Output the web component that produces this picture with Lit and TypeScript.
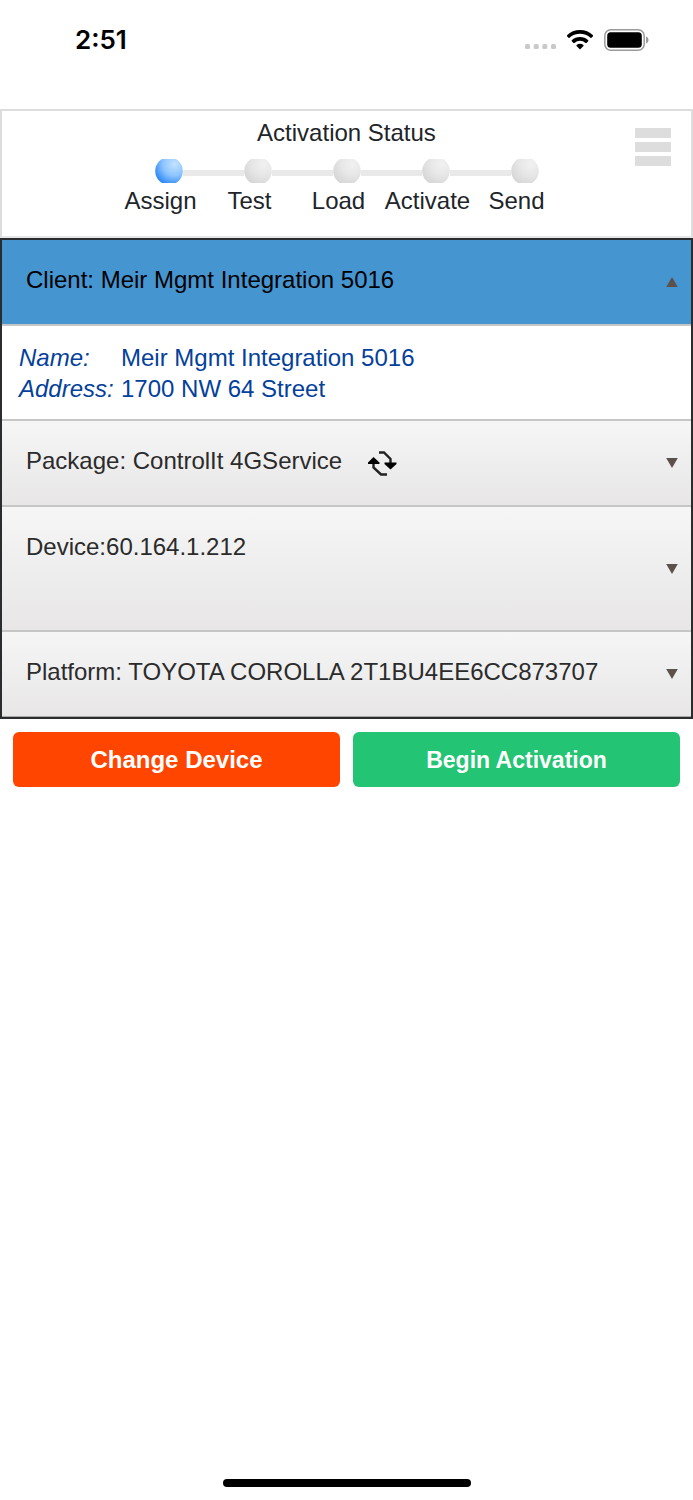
import { LitElement, html, css, nothing } from "lit";
import { customElement, property, state } from "lit/decorators.js";
import { classMap } from "lit/directives/class-map.js";

@customElement("status-bar")
class StatusBar extends LitElement {
  static styles = css`
    :host {
      display: flex;
      align-items: flex-start;
      justify-content: space-between;
      box-sizing: border-box;
      height: 109px;
      padding: 24px 44px 0 75px;
    }
    .time {
      font: 600 26px/32px Inter, sans-serif;
      color: #000;
    }
    .icons {
      display: flex;
      align-items: center;
      gap: 11px;
      height: 32px;
    }
    .signal {
      align-self: flex-end;
      margin-bottom: 7px;
    }
    svg {
      display: block;
    }
  `;

  render() {
    return html`
      <span class="time">2:51</span>
      <div class="icons">
        <svg class="signal" width="31" height="5" viewBox="0 0 31 5" fill="#c9c9c9" aria-hidden="true">
          <rect width="5" height="5" rx="1.5" />
          <rect x="8.7" width="5" height="5" rx="1.5" />
          <rect x="17.3" width="5" height="5" rx="1.5" />
          <rect x="26" width="5" height="5" rx="1.5" />
        </svg>
        <svg width="26" height="20" viewBox="0 0 26 20" aria-hidden="true">
          <path
            d="M13 0C8 0 3.4 1.9 0 5.2q-.4.5 0 1l1.5 1.6q.5.4 1 0C5.3 5.200 9 3.800 13 3.800s7.700 1.400 10.500 4q.5.4 1 0L26 6.200q.4-.5 0-1C22.600 1.900 18 0 13 0Z"
          />
          <path
            d="M13 7c-3.100 0-6 1.200-8.200 3.200q-.5.5 0 1l1.700 1.700q.5.4 1 0a8.200 8.200 0 0 1 11 0q.5.4 1 0l1.700-1.700q.5-.5 0-1C19 8.200 16.100 7 13 7Z"
          />
          <path d="M13 13.800c-1.300 0-2.500.4-3.400 1.200q-.5.5 0 1l2.900 3q.5.5 1 0l2.900-3q.5-.5 0-1c-.9-.8-2.100-1.200-3.400-1.200Z" />
        </svg>
        <svg width="45" height="22" viewBox="0 0 45 22" aria-hidden="true">
          <rect x=".8" y=".8" width="39.4" height="20.4" rx="6" fill="none" stroke="#9a9a9a" stroke-width="1.5" />
          <rect x="3.2" y="3.2" width="34.6" height="15.6" rx="3.5" />
          <path d="M42 7.500c1.600.6 2.500 1.900 2.500 3.500s-.9 2.900-2.500 3.500Z" fill="#9a9a9a" />
        </svg>
      </div>
    `;
  }
}

@customElement("step-dot")
class StepDot extends LitElement {
  @property({ type: Boolean }) active = false;

  static styles = css`
    :host {
      display: block;
    }
    svg {
      display: block;
    }
  `;

  render() {
    const [light, mid, dark] = this.active
      ? ["#c4e2ff", "#8cc4ff", "#1f7ff5"]
      : ["#f1f1f1", "#e6e6e6", "#d4d4d4"];
    return html`
      <svg width="28" height="24" viewBox="0 0 28 24" aria-hidden="true">
        <defs>
          <radialGradient id="ball" cx=".7" cy=".25" r=".85">
            <stop offset="0" stop-color=${light} />
            <stop offset=".5" stop-color=${mid} />
            <stop offset="1" stop-color=${dark} />
          </radialGradient>
        </defs>
        <circle cx="14" cy="12" r="13.8" fill="url(#ball)" />
      </svg>
    `;
  }
}

@customElement("activation-progress")
class ActivationProgress extends LitElement {
  @property({ type: Number }) current = 0;

  private steps = ["Assign", "Test", "Load", "Activate", "Send"];

  static styles = css`
    :host {
      display: block;
      box-sizing: border-box;
      min-height: 129px;
      padding: 7px 20px 0;
      border: 2px solid #ddd;
      border-bottom-color: #e6e6e6;
      color: #212529;
    }
    .bar {
      display: grid;
      grid-template-columns: 1fr auto 1fr;
      align-items: start;
    }
    .center {
      grid-column: 2;
    }
    h1 {
      margin: 0;
      font: inherit;
      line-height: 30px;
      text-align: center;
    }
    ol {
      display: grid;
      grid-template-columns: repeat(5, 89px);
      margin: 11px 0 0;
      padding: 0;
      list-style: none;
    }
    .step {
      display: flex;
      flex-direction: column;
      align-items: center;
    }
    .track {
      display: flex;
      align-items: center;
      align-self: stretch;
    }
    .line {
      flex: 1;
      height: 6px;
      margin-top: 4px;
      background: #e9e9e9;
    }
    .line.none {
      background: none;
    }
    .label {
      margin: 3px 16px 0 0;
      line-height: 30px;
      white-space: nowrap;
    }
    .menu {
      grid-column: 3;
      justify-self: end;
      display: grid;
      gap: 4px;
      width: 36px;
      margin-top: 10px;
      padding: 0;
      border: 0;
      background: none;
      cursor: pointer;
    }
    .stripe {
      height: 10px;
      background: #ddd;
    }
  `;

  render() {
    const last = this.steps.length - 1;
    return html`
      <div class="bar">
        <div class="center">
          <h1>Activation Status</h1>
          <ol>
            ${this.steps.map(
              (name, i) => html`
                <li class="step" aria-current=${i === this.current ? "step" : nothing}>
                  <div class="track">
                    <span class=${classMap({ line: true, none: i === 0 })}></span>
                    <step-dot ?active=${i === this.current}></step-dot>
                    <span class=${classMap({ line: true, none: i === last })}></span>
                  </div>
                  <span class="label">${name}</span>
                </li>
              `
            )}
          </ol>
        </div>
        <button class="menu" type="button" aria-label="Menu">
          <span class="stripe"></span>
          <span class="stripe"></span>
          <span class="stripe"></span>
        </button>
      </div>
    `;
  }
}

interface Section {
  id: string;
  title: string;
  tall?: boolean;
  refresh?: boolean;
  details?: [string, string][];
}

const SECTIONS: Section[] = [
  {
    id: "client",
    title: "Client: Meir Mgmt Integration 5016",
    details: [
      ["Name:", "Meir Mgmt Integration 5016"],
      ["Address:", "1700 NW 64 Street"],
    ],
  },
  { id: "package", title: "Package: ControlIt 4GService", refresh: true },
  { id: "device", title: "Device:60.164.1.212", tall: true },
  { id: "platform", title: "Platform: TOYOTA COROLLA 2T1BU4EE6CC873707" },
];

@customElement("section-list")
class SectionList extends LitElement {
  @state() private open = "client";

  static styles = css`
    :host {
      display: block;
      border: 2px solid #2b2c2e;
    }
    .row {
      display: flex;
      align-items: center;
      box-sizing: border-box;
      min-height: 86px;
      padding: 0 11px 0 24px;
      border-bottom: 2px solid #c6c6c6;
      background: linear-gradient(#f6f6f6, #e8e6e7);
      color: #2b2b2b;
    }
    .row.tall {
      min-height: 125px;
    }
    .row.open {
      background: #4595d1;
      color: #000;
    }
    .row.last {
      min-height: 85px;
      border-bottom: 1px solid #a8a8a8;
    }
    button {
      padding: 0;
      border: 0;
      background: none;
      color: inherit;
      font: inherit;
      cursor: pointer;
    }
    h2 {
      align-self: flex-start;
      margin: 25px 0 0;
      font: inherit;
      line-height: 30px;
    }
    .title {
      display: block;
      line-height: 30px;
      text-align: left;
    }
    .refresh {
      margin-left: 26px;
    }
    .arrow {
      margin-left: auto;
      padding: 2px;
    }
    .arrow.open svg {
      transform: rotate(180deg);
    }
    .details {
      display: grid;
      grid-template-columns: 102px 1fr;
      margin: 0;
      padding: 16px 17px 15px;
      border-bottom: 2px solid #c6c6c6;
      background: #fff;
      color: #04419b;
      line-height: 31px;
    }
    dt {
      font-style: italic;
    }
    dd {
      margin: 0;
    }
    svg {
      display: block;
    }
  `;

  private toggle(id: string) {
    this.open = this.open === id ? "" : id;
  }

  private refreshIcon() {
    return html`
      <svg width="29" height="26" viewBox="0 0 29 26" aria-hidden="true">
        <path d="M11 2.500H16L22.500 9V14" fill="none" stroke="#222" stroke-width="2.4" />
        <path d="M16.500 12.500H28.500V14L22.500 19.500L16.500 14Z" fill="#000" />
        <path d="M19 24.500H13L5.500 17.500V12" fill="none" stroke="#222" stroke-width="2.4" />
        <path d="M0 14V12.500L5.500 7L11.500 12.500V14Z" fill="#000" />
      </svg>
    `;
  }

  render() {
    return SECTIONS.map((s, i) => {
      const open = s.id === this.open;
      const label = s.title.split(":")[0];
      return html`
        <div class=${classMap({ row: true, open, tall: !!s.tall, last: i === SECTIONS.length - 1 })}>
          <h2>
            <button class="title" type="button" aria-expanded=${open} @click=${() => this.toggle(s.id)}>
              ${s.title}
            </button>
          </h2>
          ${s.refresh
            ? html`<button class="refresh" type="button" aria-label="Refresh package">${this.refreshIcon()}</button>`
            : nothing}
          <button
            class=${classMap({ arrow: true, open })}
            type="button"
            aria-label=${`Toggle ${label}`}
            @click=${() => this.toggle(s.id)}
          >
            <svg width="12" height="10" viewBox="0 0 12 10" aria-hidden="true">
              <path d="M.2 0H11.800L6 10Z" fill="#5c504c" />
            </svg>
          </button>
        </div>
        ${open && s.details
          ? html`<dl class="details">
              ${s.details.map(([k, v]) => html`<dt>${k}</dt><dd>${v}</dd>`)}
            </dl>`
          : nothing}
      `;
    });
  }
}

@customElement("app-root")
class AppRoot extends LitElement {
  static styles = css`
    :host {
      display: flex;
      flex-direction: column;
      box-sizing: border-box;
      min-height: 100vh;
      background: #fff;
      font: 24px/30px "Liberation Sans", Arial, sans-serif;
    }
    .actions {
      display: grid;
      grid-template-columns: 1fr 1fr;
      gap: 13px;
      padding: 13px;
    }
    .action {
      height: 55px;
      padding: 0;
      border: 0;
      border-radius: 6px;
      color: #fff;
      font: inherit;
      font-weight: 700;
      cursor: pointer;
    }
    .change {
      background: #ff4500;
    }
    .begin {
      background: #23c473;
      font-size: 23px;
    }
    .home {
      width: 248px;
      height: 8px;
      margin: auto auto 13px;
      border-radius: 4px;
      background: #000;
    }
  `;

  render() {
    return html`
      <status-bar></status-bar>
      <activation-progress .current=${0}></activation-progress>
      <section-list></section-list>
      <div class="actions">
        <button class="action change" type="button">Change Device</button>
        <button class="action begin" type="button">Begin Activation</button>
      </div>
      <div class="home"></div>
    `;
  }
}
